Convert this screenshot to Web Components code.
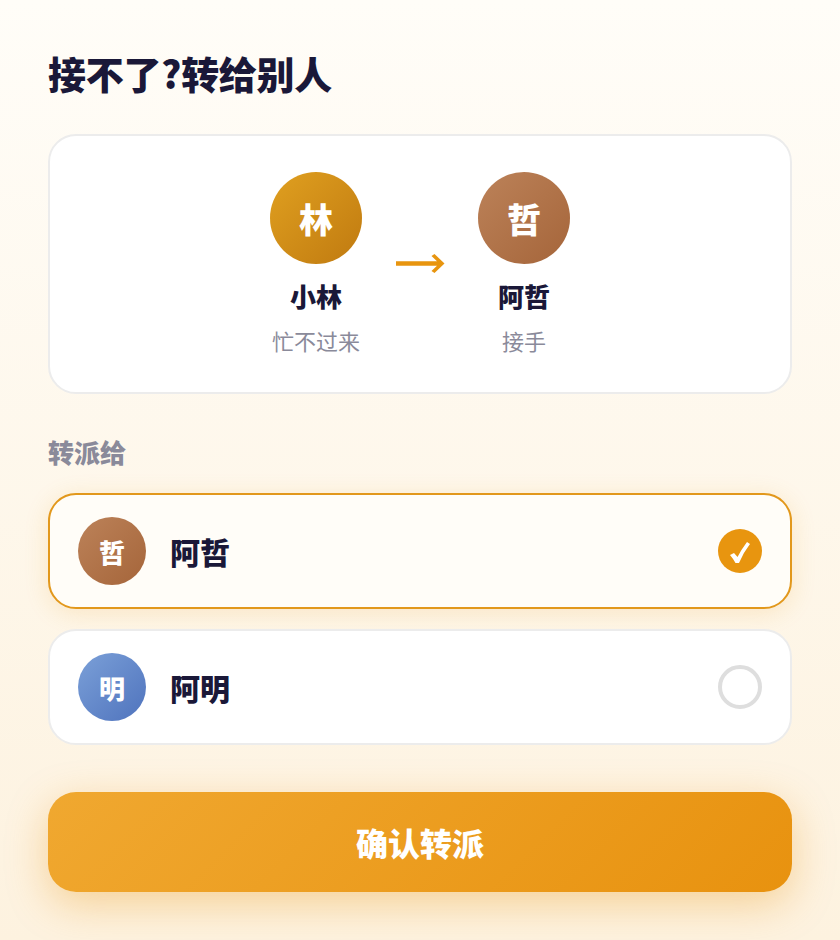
<!DOCTYPE html>
<html lang="zh-CN">
<head>
<meta charset="utf-8">
<title>转派</title>
<style>
  html, body { margin: 0; height: 100%; }
  body {
    font-family: "Noto Sans CJK SC", "Noto Sans", sans-serif;
    color: #1a1838;
    background: linear-gradient(180deg, #fffdf8 0%, #fdf2df 100%);
    overflow: hidden;
  }
</style>
</head>
<body>
<transfer-page>
  <span slot="title">接不了?转给别人</span>
  <handover-card slot="flow"></handover-card>
  <span slot="label">转派给</span>
  <assignee-row slot="rows" name="阿哲" short="哲" tone="brown" selected></assignee-row>
  <assignee-row slot="rows" name="阿明" short="明" tone="blue"></assignee-row>
  <span slot="action">确认转派</span>
</transfer-page>

<script>
class UserAvatar extends HTMLElement {
    constructor() {
        super();
        const size = this.getAttribute('size') || 92;
        const font = this.getAttribute('font') || 34;
        this.attachShadow({ mode: 'open' }).innerHTML = `
        <style>
          :host {
            display: flex;
            align-items: center;
            justify-content: center;
            flex: none;
            width: ${size}px;
            height: ${size}px;
            border-radius: 50%;
            color: #fff;
            font-size: ${font}px;
            font-weight: 900;
          }
          :host([tone="gold"]) { background: linear-gradient(135deg, #e0a020, #c07a10); }
          :host([tone="brown"]) { background: linear-gradient(135deg, #bc8259, #a5653a); }
          :host([tone="blue"]) { background: linear-gradient(135deg, #7ba0d8, #4f73bd); }
        </style>
        <slot></slot>`;
    }
}
customElements.define('user-avatar', UserAvatar);

class PersonBlock extends HTMLElement {
    constructor() {
        super();
        this.attachShadow({ mode: 'open' }).innerHTML = `
        <style>
          :host {
            display: flex;
            flex-direction: column;
            align-items: center;
            width: 92px;
          }
          .name {
            margin-top: 15px;
            font-size: 26px;
            line-height: 34px;
            font-weight: 900;
            white-space: nowrap;
          }
          .note {
            margin-top: 12px;
            font-size: 22px;
            line-height: 30px;
            color: #8a8a9a;
            white-space: nowrap;
          }
        </style>
        <user-avatar tone="${this.getAttribute('tone')}">${this.getAttribute('short')}</user-avatar>
        <div class="name">${this.getAttribute('name')}</div>
        <div class="note">${this.getAttribute('note')}</div>`;
    }
}
customElements.define('person-block', PersonBlock);

class HandoverCard extends HTMLElement {
    constructor() {
        super();
        this.attachShadow({ mode: 'open' }).innerHTML = `
        <style>
          :host {
            display: flex;
            justify-content: center;
            align-items: flex-start;
            gap: 32px;
            box-sizing: border-box;
            height: 260px;
            padding: 36px 0;
            background: #fff;
            border: 2px solid #ececec;
            border-radius: 28px;
          }
          svg {
            display: block;
            flex: none;
            margin-top: 80px;
            fill: #e8950f;
          }
        </style>
        <person-block tone="gold" short="林" name="小林" note="忙不过来"></person-block>
        <svg width="52" height="24" viewBox="0 0 52 24">
          <path d="M2 9.3H43L37.5 4L40.5 2L50.5 11.5L40.5 21L37.5 19L43 13.7H2Z"/>
        </svg>
        <person-block tone="brown" short="哲" name="阿哲" note="接手"></person-block>`;
    }
}
customElements.define('handover-card', HandoverCard);

class AssigneeRow extends HTMLElement {
    constructor() {
        super();
        const selected = this.hasAttribute('selected');
        this.attachShadow({ mode: 'open' }).innerHTML = `
        <style>
          :host {
            display: flex;
            align-items: center;
            gap: 24px;
            box-sizing: border-box;
            height: 116px;
            padding: 0 28px;
            background: #fff;
            border: 2px solid #ececec;
            border-radius: 28px;
          }
          :host([selected]) {
            background: #fffdf8;
            border-color: #e2981c;
            box-shadow: 0 4px 24px rgba(232, 149, 15, 0.16);
          }
          .name {
            flex: 1;
            font-size: 30px;
            font-weight: 900;
          }
          .radio {
            flex: none;
            box-sizing: border-box;
            width: 44px;
            height: 44px;
            border: 4px solid #dedede;
            border-radius: 50%;
          }
          :host([selected]) .radio {
            background: #e8950f;
            border: 0;
          }
          svg { display: block; fill: #fff; }
        </style>
        <user-avatar size="68" font="26" tone="${this.getAttribute('tone')}">${this.getAttribute('short')}</user-avatar>
        <div class="name">${this.getAttribute('name')}</div>
        <div class="radio">${selected ? `<svg width="44" height="44" viewBox="0 0 44 44">
          <path d="M12 26L16 24L19.5 28Q23 21 29 13L32 15Q25 24 21 34L17.5 34Q15 29.5 12 26Z"/>
        </svg>` : ''}</div>`;
    }
}
customElements.define('assignee-row', AssigneeRow);

class TransferPage extends HTMLElement {
    constructor() {
        super();
        this.attachShadow({ mode: 'open' }).innerHTML = `
        <style>
          :host {
            display: block;
            box-sizing: border-box;
            height: 940px;
            padding: 48px 48px 0;
          }
          h1 {
            margin: 0 0 36px;
            font-size: 38px;
            line-height: 50px;
            font-weight: 900;
            letter-spacing: -0.3px;
          }
          .label {
            margin: 39px 0 22px;
            font-size: 26px;
            line-height: 38px;
            font-weight: 900;
            color: #8a8a9a;
          }
          .rows {
            display: flex;
            flex-direction: column;
            gap: 20px;
          }
          button {
            display: block;
            width: 100%;
            height: 100px;
            margin-top: 47px;
            border: 0;
            border-radius: 28px;
            background: linear-gradient(135deg, #f0a830, #e8920f);
            box-shadow: 0 12px 40px rgba(232, 146, 15, 0.35);
            color: #fff;
            font: inherit;
            font-size: 32px;
            font-weight: 900;
          }
        </style>
        <h1><slot name="title"></slot></h1>
        <slot name="flow"></slot>
        <div class="label"><slot name="label"></slot></div>
        <div class="rows"><slot name="rows"></slot></div>
        <button><slot name="action"></slot></button>`;
    }
}
customElements.define('transfer-page', TransferPage);
</script>
</body>
</html>
